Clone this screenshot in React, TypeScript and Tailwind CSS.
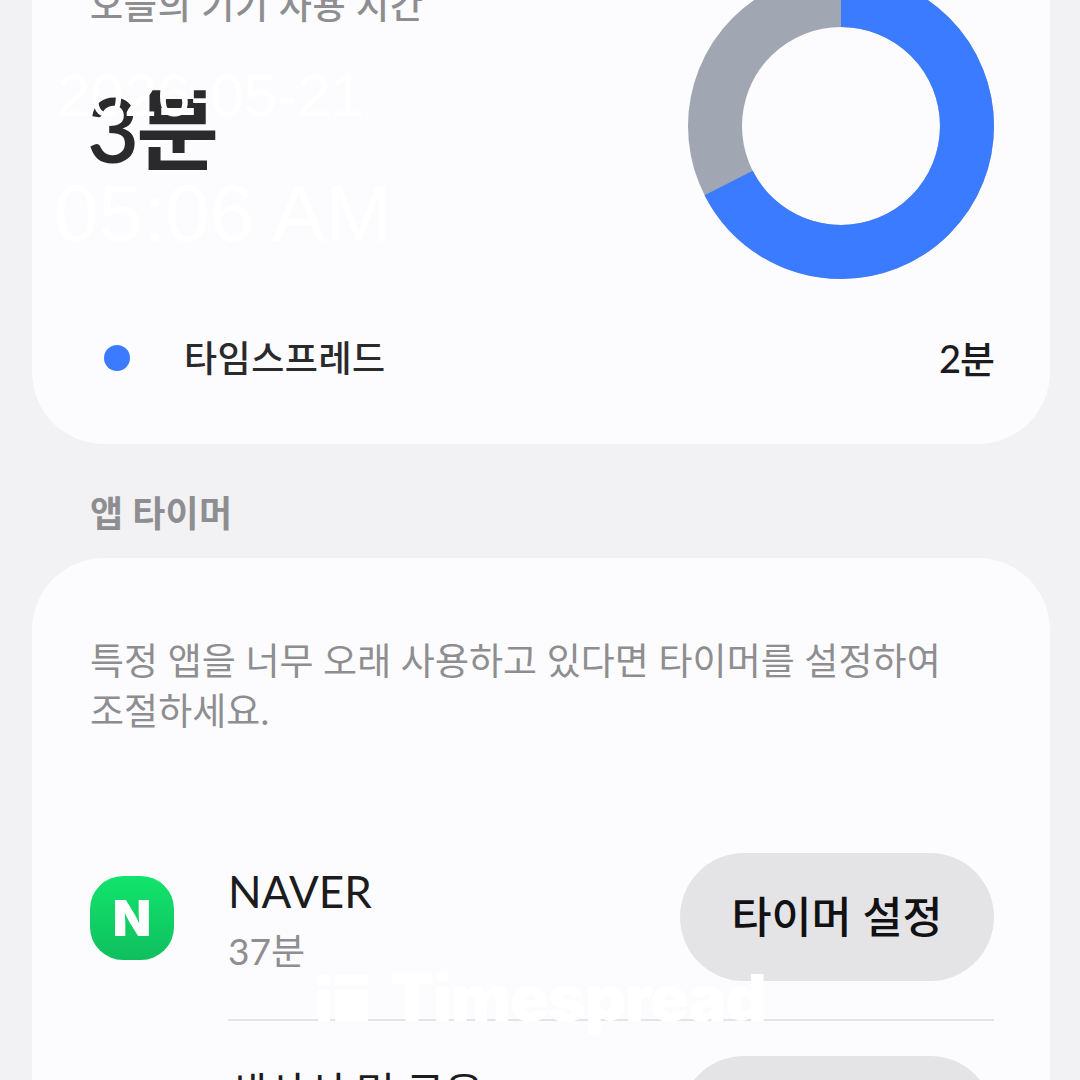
export default function App() {
  const ko = "font-['Lato','Noto_Sans_CJK_KR',sans-serif]";
  return (
    <div className={`relative h-[1080px] w-[1080px] overflow-hidden bg-[#f2f2f4] ${ko}`}>
      <div className="mt-[-80px] flex flex-col pl-[32px] pr-[30px]">
        {/* usage card */}
        <section className="flex h-[524px] flex-col rounded-b-[72px] bg-[#fcfcfe] pl-[58px] pr-[56px]">
          <div className="flex justify-between pt-[53px]">
            <div className="flex flex-col">
              <p className="mt-[9px] text-[36px] leading-[46px] font-medium tracking-[0.7px] text-[#8e8e91]">오늘의 기기 사용 시간</p>
              <p className="mt-[47px] ml-[-3px] text-[90px] leading-[106px] font-semibold tracking-[-3px] text-[#2a2a2d]">3분</p>
            </div>
            <svg viewBox="0 0 306 306" className="h-[306px] w-[306px] shrink-0">
              <circle cx="153" cy="153" r="126" fill="none" stroke="#a0a6b2" strokeWidth="54" />
              <circle cx="153" cy="153" r="126" fill="none" stroke="#3a7bff" strokeWidth="54" strokeDasharray="534.4 791.7" transform="rotate(-90 153 153)" />
            </svg>
          </div>
          <div className="mt-[56px] flex items-center pl-[14px]">
            <span className="h-[26px] w-[26px] rounded-full bg-[#3a7bff]" />
            <span className="ml-[54px] text-[36px] leading-[46px] font-medium tracking-[0.5px] text-[#2a2a2d]">타임스프레드</span>
            <span className="ml-auto text-[38px] leading-[46px] font-medium tracking-[-1px] text-[#1c1c1e]">2분</span>
          </div>
        </section>

        <h2 className="mt-[46px] pl-[58px] text-[36px] leading-[46px] font-bold tracking-[0.2px] text-[#8e8e91]">앱 타이머</h2>

        {/* app timer card */}
        <section className="mt-[22px] rounded-t-[72px] bg-[#fcfcfe] pl-[58px] pr-[56px] pt-[78px]">
          <p className="text-[37px] leading-[50px] tracking-[0.05px] text-[#8e8e91]">
            특정 앱을 너무 오래 사용하고 있다면 타이머를 설정하여
            <br />
            조절하세요.
          </p>
          <div className="mt-[117px] flex items-start">
            <div className="mt-[23px] flex h-[84px] w-[84px] items-center justify-center rounded-[33px] bg-gradient-to-b from-[#12e46c] to-[#0fbf5e]">
              <span className="font-['Inter',sans-serif] text-[50px] leading-none font-black text-white">N</span>
            </div>
            <div className="ml-[54px] flex-1">
              <div className="flex justify-between">
                <div className="pt-[11px]">
                  <p className="text-[44px] leading-[54px] text-[#1c1c1e]">NAVER</p>
                  <p className="mt-[10px] text-[37px] leading-[46px] text-[#8e8e91]">37분</p>
                </div>
                <button className="h-[128px] w-[314px] rounded-full bg-[#e4e4e6] text-[43.5px] font-medium text-[#111113]">타이머 설정</button>
              </div>
              <div className="mt-[38px] h-[2px] bg-[#e4e4e8]" />
              <div className="mt-[35px] flex justify-between">
                <p className="mt-[10px] text-[43px] leading-[54px] tracking-[-0.5px] text-[#1c1c1e]">생산성 및 금융</p>
                <button className="h-[128px] w-[314px] rounded-full bg-[#e4e4e6] text-[43.5px] font-medium text-[#111113]">타이머 설정</button>
              </div>
            </div>
          </div>
        </section>
      </div>

      {/* watermark overlay */}
      <div className="absolute left-[57px] top-[64px] font-['Liberation_Sans',sans-serif] text-[60px] leading-[64px] text-white">2026-05-21</div>
      <div className="absolute left-[54px] top-[170px] font-['Liberation_Sans',sans-serif] text-[80px] leading-[88px] text-white">05:06 AM</div>
      <div className="absolute left-[318px] top-[968px] flex items-center gap-[22px] text-white">
        <svg viewBox="0 0 50 46" className="h-[46px] w-[50px]" fill="#fff">
          <rect x="0" y="0" width="12" height="10" />
          <rect x="0" y="15" width="12" height="31" />
          <rect x="17" y="0" width="33" height="10" />
          <rect x="17" y="15" width="33" height="31" />
        </svg>
        <span className="font-['Inter',sans-serif] text-[64px] leading-[60px] font-black tracking-[-1px]">Timespread</span>
      </div>
    </div>
  );
}
